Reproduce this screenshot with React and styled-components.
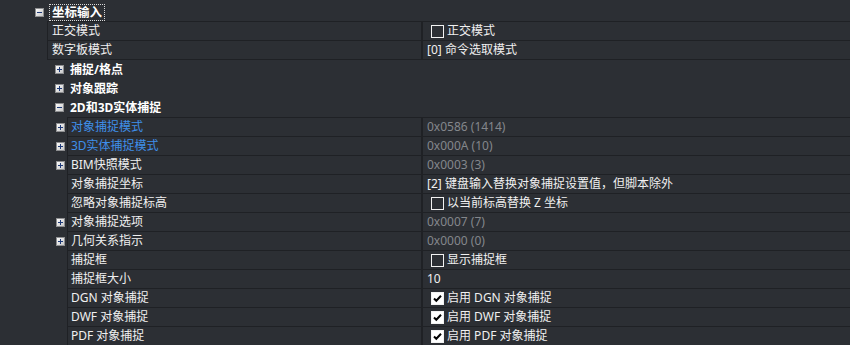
import React from "react";
import styled, { createGlobalStyle } from "styled-components";

const Global = createGlobalStyle`
  html, body { margin: 0; padding: 0; background: #2c2f34; }
  body { font-family: "Noto Sans", "Noto Sans CJK SC", sans-serif; font-size: 12px; color: #f2f2f2; }
  #root { width: 850px; height: 345px; overflow: hidden; }
`;

const LINE = "#1f2125";

const Tree = styled.div`
  width: 850px;
  height: 345px;
  padding-top: 3px;
  box-sizing: border-box;
  background: #2c2f34;
  overflow: hidden;
`;

const HeaderRow = styled.div`
  display: flex;
  align-items: center;
  height: 18px;
  padding-left: 35px;
`;

const HeaderLabel = styled.span`
  margin-left: 5px;
  height: 17px;
  box-sizing: border-box;
  padding: 0 2px;
  border: 1px dotted #d8d8d8;
  font-weight: bold;
  font-size: 12.5px;
  line-height: 15px;
  color: #ffffff;
`;

const Block = styled.div`
  border-top: 1px solid transparent;
  position: relative;
`;

const BlockLine = styled.div`
  height: 1px;
  margin-left: ${(p) => p.$gutter}px;
  background: ${LINE};
`;

const GroupRow = styled.div`
  display: flex;
  align-items: center;
  height: 19px;
  padding-left: 55px;
  gap: 6px;
`;

const GroupLabel = styled.span`
  font-weight: bold;
  color: #ffffff;
  line-height: 19px;
`;

const Row = styled.div`
  display: flex;
  height: 19px;
`;

const Gutter = styled.div`
  flex: 0 0 ${(p) => p.$w}px;
  display: flex;
  align-items: center;
  justify-content: flex-end;
  padding-right: 2px;
  box-sizing: border-box;
  height: 18px;
`;

const NameCell = styled.div`
  flex: 0 0 ${(p) => 423 - p.$gutter}px;
  box-sizing: border-box;
  border-left: 1px solid ${LINE};
  border-right: 2px solid ${LINE};
  border-bottom: 1px solid ${LINE};
  padding-left: ${(p) => (p.$gutter > 50 ? 3 : 4)}px;
  line-height: 18px;
  white-space: nowrap;
  color: ${(p) => (p.$blue ? "#3f8fea" : "#f0f0f0")};
`;

const ValueCell = styled.div`
  flex: 1;
  display: flex;
  align-items: center;
  box-sizing: border-box;
  border-bottom: 1px solid ${LINE};
  padding-left: ${(p) => (p.$check ? 8 : 4)}px;
  line-height: 18px;
  white-space: nowrap;
  color: ${(p) => (p.$muted ? "#84878c" : "#f0f0f0")};
`;

const Box = styled.span`
  width: 13px;
  height: 13px;
  box-sizing: border-box;
  border: 1px solid #f2f2f2;
  background: ${(p) => (p.$on ? "#ffffff" : "transparent")};
  margin-right: 3px;
  display: inline-flex;
  align-items: center;
  justify-content: center;
`;

function Expander({ open }) {
  return (
    <svg width="9" height="9" viewBox="0 0 9 9" style={{ display: "block", flex: "none" }}>
      <defs>
        <linearGradient id="eg" x1="0" y1="0" x2="1" y2="1">
          <stop offset="0" stopColor="#ffffff" />
          <stop offset="1" stopColor="#c4c4c4" />
        </linearGradient>
      </defs>
      <rect x="0.5" y="0.5" width="8" height="8" fill="url(#eg)" stroke="#8e8f91" />
      <line x1="2" y1="4.5" x2="7" y2="4.5" stroke="#1e3a78" />
      {!open && <line x1="4.5" y1="2" x2="4.5" y2="7" stroke="#1e3a78" />}
    </svg>
  );
}

function Check({ on }) {
  return (
    <Box $on={on}>
      {on && (
        <svg width="11" height="11" viewBox="0 0 11 11">
          <path d="M2 5.5 L4.3 7.8 L9 2.8" fill="none" stroke="#000" strokeWidth="2" />
        </svg>
      )}
    </Box>
  );
}

function Prop({ gutter, name, value, blue, muted, check, expander }) {
  return (
    <Row>
      <Gutter $w={gutter}>{expander && <Expander open={false} />}</Gutter>
      <NameCell $gutter={gutter} $blue={blue}>{name}</NameCell>
      <ValueCell $muted={muted} $check={check !== undefined}>
        {check !== undefined && <Check on={check} />}
        {value}
      </ValueCell>
    </Row>
  );
}

const level2 = [
  { name: "对象捕捉模式", value: "0x0586 (1414)", blue: true, muted: true, expander: true },
  { name: "3D实体捕捉模式", value: "0x000A (10)", blue: true, muted: true, expander: true },
  { name: "BIM快照模式", value: "0x0003 (3)", muted: true, expander: true },
  { name: "对象捕捉坐标", value: "[2] 键盘输入替换对象捕捉设置值，但脚本除外" },
  { name: "忽略对象捕捉标高", value: "以当前标高替换 Z 坐标", check: false },
  { name: "对象捕捉选项", value: "0x0007 (7)", muted: true, expander: true },
  { name: "几何关系指示", value: "0x0000 (0)", muted: true, expander: true },
  { name: "捕捉框", value: "显示捕捉框", check: false },
  { name: "捕捉框大小", value: "10" },
  { name: "DGN 对象捕捉", value: "启用 DGN 对象捕捉", check: true },
  { name: "DWF 对象捕捉", value: "启用 DWF 对象捕捉", check: true },
  { name: "PDF 对象捕捉", value: "启用 PDF 对象捕捉", check: true },
];

export default function App() {
  return (
    <>
      <Global />
      <Tree>
        <HeaderRow>
          <Expander open />
          <HeaderLabel>坐标输入</HeaderLabel>
        </HeaderRow>
        <BlockLine $gutter={47} />
        <Prop gutter={47} name="正交模式" value="正交模式" check={false} />
        <Prop gutter={47} name="数字板模式" value="[0] 命令选取模式" />
        <GroupRow>
          <Expander />
          <GroupLabel>捕捉/格点</GroupLabel>
        </GroupRow>
        <GroupRow>
          <Expander />
          <GroupLabel>对象跟踪</GroupLabel>
        </GroupRow>
        <GroupRow>
          <Expander open />
          <GroupLabel>2D和3D实体捕捉</GroupLabel>
        </GroupRow>
        <BlockLine $gutter={67} />
        {level2.map((r) => (
          <Prop key={r.name} gutter={67} {...r} />
        ))}
      </Tree>
    </>
  );
}
